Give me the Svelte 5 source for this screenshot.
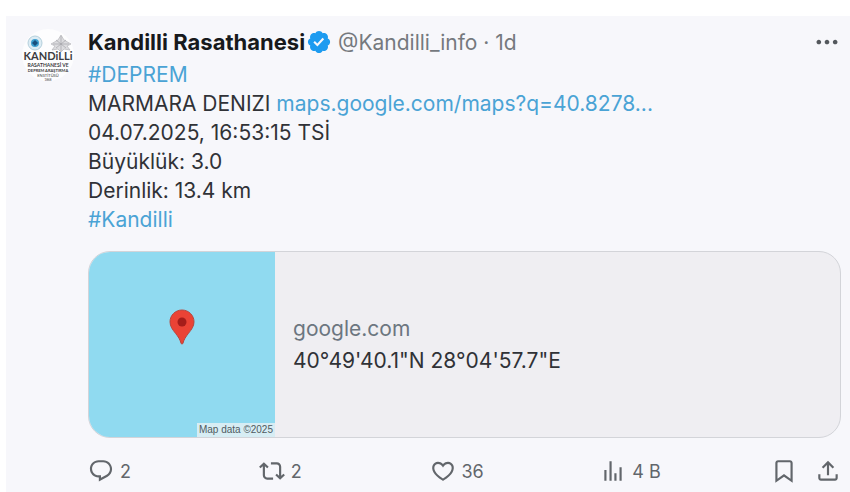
<script lang="ts">
  type Action = { name: string; count: string; path: string };

  const actions: Action[] = [
    {
      name: 'Reply',
      count: '2',
      path: 'M1.751 10c0-4.42 3.584-8 8.005-8h4.366c4.49 0 8.129 3.64 8.129 8.13 0 2.96-1.607 5.68-4.196 7.11l-8.054 4.46v-3.69h-.067c-4.49.1-8.183-3.51-8.183-8.01zm8.005-6c-3.317 0-6.005 2.69-6.005 6 0 3.37 2.77 6.08 6.138 6.01l.351-.01h1.761v2.3l5.087-2.81c1.951-1.08 3.163-3.13 3.163-5.36 0-3.39-2.744-6.13-6.129-6.13H9.756z',
    },
    {
      name: 'Repost',
      count: '2',
      path: 'M4.5 3.88l4.432 4.14-1.364 1.46L5.5 7.55V16c0 1.1.896 2 2 2H13v2H7.5c-2.209 0-4-1.79-4-4V7.55L1.432 9.48.068 8.02 4.5 3.88zM16.5 6H11V4h5.5c2.209 0 4 1.79 4 4v8.45l2.068-1.93 1.364 1.46-4.432 4.14-4.432-4.14 1.364-1.46 2.068 1.93V8c0-1.1-.896-2-2-2z',
    },
    {
      name: 'Like',
      count: '36',
      path: 'M16.697 5.5c-1.222-.06-2.679.51-3.89 2.16l-.805 1.09-.806-1.09C9.984 6.01 8.526 5.44 7.304 5.5c-1.243.07-2.349.78-2.91 1.91-.552 1.12-.633 2.78.479 4.82 1.074 1.97 3.257 4.27 7.129 6.61 3.87-2.34 6.052-4.64 7.126-6.61 1.111-2.04 1.03-3.7.477-4.82-.561-1.13-1.666-1.84-2.908-1.91zm4.187 7.69c-1.351 2.48-4.001 5.12-8.379 7.67l-.503.3-.504-.3c-4.379-2.55-7.029-5.19-8.382-7.67-1.36-2.5-1.41-4.86-.514-6.67.887-1.79 2.647-2.91 4.601-3.01 1.651-.09 3.368.56 4.798 2.01 1.429-1.45 3.146-2.1 4.796-2.01 1.954.1 3.714 1.22 4.601 3.01.896 1.81.846 4.17-.514 6.67z',
    },
    {
      name: 'Views',
      count: '4 B',
      path: 'M8.75 21V3h2v18h-2zM18 21V8.5h2V21h-2zM4 21l.004-10h2L6 21H4zm9.248 0v-7h2v7h-2z',
    },
  ];

  const lines = ['04.07.2025, 16:53:15 TSİ', 'Büyüklük: 3.0', 'Derinlik: 13.4 km'];
</script>

<article class="post">
  <a class="avatar" href="#profile" aria-label="Kandilli Rasathanesi">
    <svg viewBox="0 0 52 52" aria-hidden="true">
      <circle cx="26" cy="26" r="26" fill="#fdfdfe" />
      <circle cx="13" cy="14" r="7" fill="#dcecf4" stroke="#b4cfdc" stroke-width="1" />
      <circle cx="13" cy="14" r="4" fill="#3d9fd0" />
      <path d="M13 11l3 3-3 3-3-3z" fill="#174f7d" />
      <path
        d="M39 6l3 5 7 4-4 2 3 4-6-1-3 3-3-3-6 1 3-4-4-2 7-4z"
        fill="#dcdcdf"
        stroke="#b6b6ba"
        stroke-width=".7"
      />
      <path d="M39 7v15M31 15h16M34 19l10-8M34 11l10 8" stroke="#a5a5aa" stroke-width=".7" />
      <g text-anchor="middle" fill="#3b3b40">
        <text x="26" y="31" font-size="11" font-weight="700">KANDiLLi</text>
        <text x="26" y="38" font-size="5" font-weight="700">RASATHANESİ VE</text>
        <text x="26" y="43" font-size="4" font-weight="700">DEPREM ARAŞTIRMA</text>
        <text x="26" y="48" font-size="4">ENSTİTÜSÜ</text>
        <text x="26" y="52" font-size="3">1868</text>
      </g>
    </svg>
  </a>

  <div class="main">
    <header>
      <a class="name" href="#profile">Kandilli Rasathanesi</a>
      <svg class="verified" viewBox="0 0 22 22" role="img" aria-label="Verified">
        <path
          d="M20.396 11c-.018-.646-.215-1.275-.57-1.816-.354-.54-.852-.972-1.438-1.246.223-.607.27-1.264.14-1.897-.131-.634-.437-1.218-.882-1.687-.47-.445-1.053-.75-1.687-.882-.633-.13-1.29-.083-1.897.14-.273-.587-.704-1.086-1.245-1.44S11.647 1.62 11 1.604c-.646.017-1.273.213-1.813.568s-.969.854-1.24 1.44c-.608-.223-1.267-.272-1.902-.14-.635.13-1.22.436-1.69.882-.445.47-.749 1.055-.878 1.688-.13.633-.08 1.29.144 1.896-.587.274-1.087.705-1.443 1.245-.356.54-.555 1.17-.574 1.817.02.647.218 1.276.574 1.817.356.54.856.972 1.443 1.245-.224.606-.274 1.263-.144 1.896.13.634.433 1.218.877 1.688.47.443 1.054.747 1.687.878.633.132 1.29.084 1.897-.136.274.586.705 1.084 1.246 1.439.54.354 1.17.551 1.816.569.647-.016 1.276-.213 1.817-.567s.972-.854 1.245-1.44c.604.239 1.266.296 1.903.164.636-.132 1.22-.447 1.68-.907.46-.46.776-1.044.908-1.681s.075-1.299-.165-1.903c.586-.274 1.084-.705 1.439-1.246.354-.54.551-1.17.569-1.816zM9.662 14.85l-3.429-3.428 1.293-1.302 2.072 2.072 4.4-4.794 1.347 1.246z"
        />
      </svg>
      <span class="meta">@Kandilli_info · 1d</span>
      <button class="more" aria-label="More">
        <svg viewBox="0 0 24 24" aria-hidden="true">
          <path d="M3 12c0-1.1.9-2 2-2s2 .9 2 2-.9 2-2 2-2-.9-2-2zm9 2c1.1 0 2-.9 2-2s-.9-2-2-2-2 .9-2 2 .9 2 2 2zm7 0c1.1 0 2-.9 2-2s-.9-2-2-2-2 .9-2 2 .9 2 2 2z" />
        </svg>
      </button>
    </header>

    <div class="text">
      <div><a href="#deprem">#DEPREM</a></div>
      <div>MARMARA DENIZI <a href="#map">maps.google.com/maps?q=40.8278...</a></div>
      {#each lines as line}
        <div>{line}</div>
      {/each}
      <div><a href="#kandilli">#Kandilli</a></div>
    </div>

    <a class="card" href="#map">
      <div class="map">
        <svg viewBox="0 0 26 36" aria-hidden="true">
          <path
            d="M13 1C6.4 1 1 6.2 1 12.800c0 4.500 2.500 7.700 5.500 11.500 2.800 3.500 4.700 6.500 5.500 9.900q1 2 2 0c.8-3.400 2.700-6.400 5.500-9.900 3-3.800 5.500-7 5.500-11.500C25 6.200 19.600 1 13 1z"
            fill="#ea4335"
            stroke="#b5473f"
          />
          <circle cx="13" cy="13" r="4.5" fill="#a51d1a" />
        </svg>
        <small>Map data ©2025</small>
      </div>
      <div class="info">
        <span class="domain">google.com</span>
        <span>40°49'40.1"N 28°04'57.7"E</span>
      </div>
    </a>

    <footer>
      {#each actions as action}
        <button aria-label={action.name}>
          <svg viewBox="0 0 24 24" aria-hidden="true"><path d={action.path} /></svg>
          <span>{action.count}</span>
        </button>
      {/each}
      <div class="tools">
        <button aria-label="Bookmark">
          <svg viewBox="0 0 24 24" aria-hidden="true">
            <path d="M4 4.5C4 3.12 5.119 2 6.5 2h11C18.881 2 20 3.12 20 4.5v18.44l-8-5.71-8 5.71V4.5zM6.5 4c-.276 0-.5.22-.5.5v14.56l6-4.29 6 4.29V4.5c0-.28-.224-.5-.5-.5h-11z" />
          </svg>
        </button>
        <button aria-label="Share">
          <svg viewBox="0 0 24 24" aria-hidden="true">
            <path d="M12 2.59l5.7 5.7-1.41 1.42L13 6.41V16h-2V6.41l-3.3 3.3-1.41-1.42L12 2.59zM21 15l-.02 3.51c0 1.38-1.12 2.49-2.5 2.49H5.5C4.11 21 3 19.88 3 18.5V15h2v3.5c0 .28.22.5.5.5h12.98c.28 0 .5-.22.5-.5L19 15h2z" />
          </svg>
        </button>
      </div>
    </footer>
  </div>
</article>

<style>
  :global(body) {
    margin: 0;
    background: #fff;
  }

  .post {
    box-sizing: border-box;
    display: flex;
    gap: 14px;
    min-height: calc(100vh - 16px);
    margin: 16px 0 0 6px;
    padding: 10px 9px 6px 16px;
    background: #f7f7fb;
    color: #303237;
    font-family: Inter, 'Liberation Sans', sans-serif;
    font-size: 21px;
  }

  a {
    color: #4aa3d5;
    text-decoration: none;
  }

  button {
    display: flex;
    align-items: center;
    padding: 0;
    border: 0;
    background: none;
    color: inherit;
    font: inherit;
    cursor: pointer;
  }

  svg {
    display: block;
    flex-shrink: 0;
    fill: currentColor;
  }

  .avatar {
    flex-shrink: 0;
    width: 52px;
  }

  .avatar svg {
    width: 52px;
    height: 52px;
    margin-top: 3px;
    overflow: visible;
    font-family: Lato, sans-serif;
  }

  .main {
    flex: 1;
    min-width: 0;
  }

  header {
    display: flex;
    align-items: center;
    height: 32px;
    white-space: nowrap;
  }

  .name {
    color: #17191c;
    font-size: 22px;
    font-weight: 700;
  }

  .verified {
    width: 26px;
    height: 26px;
    margin: 0 6px 0 1px;
    color: #1d9bf0;
  }

  .meta {
    color: #75797e;
  }

  .more {
    margin-left: auto;
    color: #54585d;
  }

  .more svg {
    width: 28px;
    height: 28px;
  }

  .text {
    margin-top: 2px;
    line-height: 29px;
  }

  .card {
    display: flex;
    height: 185px;
    margin-top: 17px;
    overflow: hidden;
    border: 1px solid #d3d4d9;
    border-radius: 22px;
    background: #efeef2;
    color: #303237;
  }

  .map {
    position: relative;
    display: grid;
    flex-shrink: 0;
    place-items: center;
    width: 186px;
    background: #90daf0;
  }

  .map svg {
    width: 26px;
    height: 36px;
    margin-bottom: 36px;
  }

  .map small {
    position: absolute;
    right: 0;
    bottom: 0;
    padding: 0 2px;
    background: #d7edf4;
    color: #4f5b61;
    font: 10px/14px 'Liberation Sans', sans-serif;
  }

  .info {
    display: flex;
    flex-direction: column;
    justify-content: center;
    padding: 0 18px;
    line-height: 32px;
  }

  .domain {
    color: #6c7680;
  }

  footer {
    display: grid;
    grid-template-columns: repeat(4, 1fr) auto;
    margin-top: 20px;
    color: #62666b;
    font-size: 18px;
  }

  footer button {
    gap: 6px;
  }

  footer svg {
    width: 26px;
    height: 26px;
  }

  .tools {
    display: flex;
    gap: 18px;
  }
</style>
